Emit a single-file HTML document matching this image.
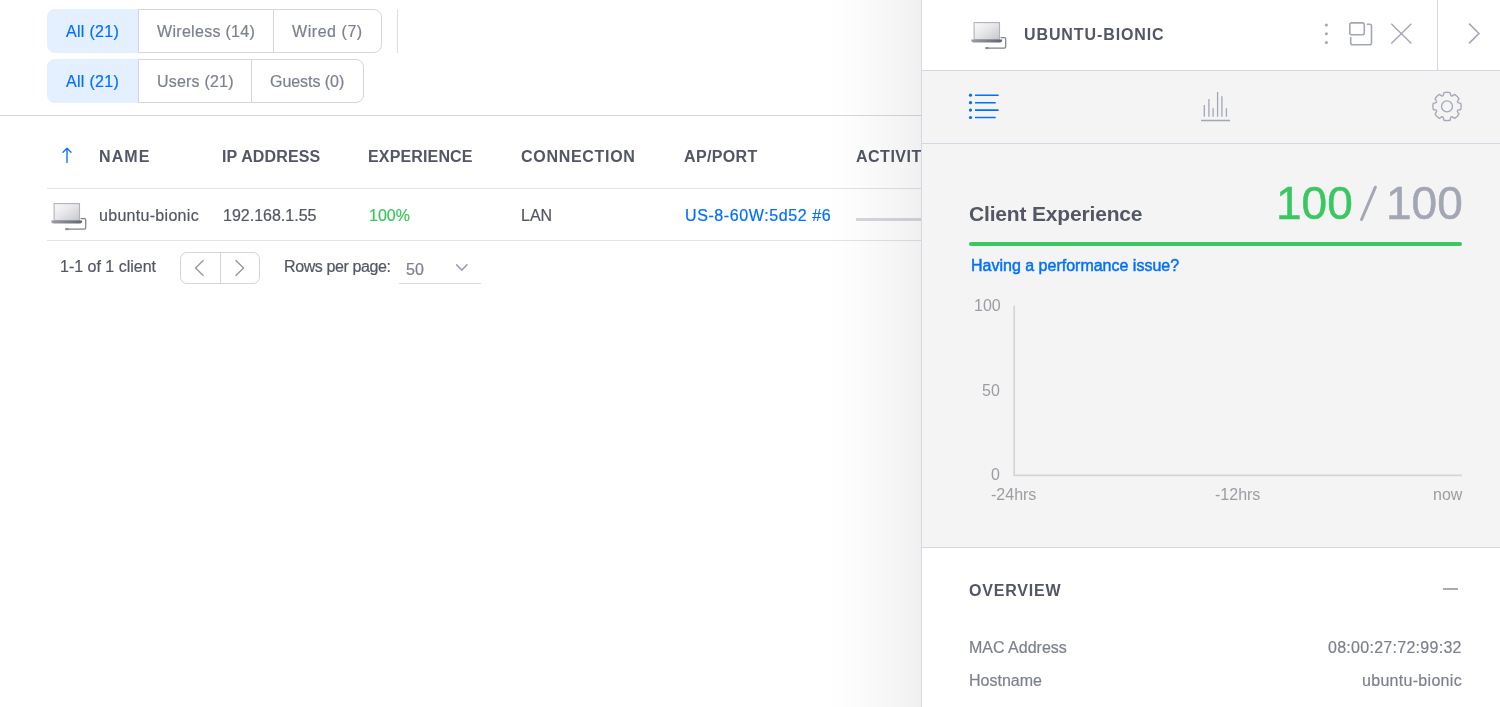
<!DOCTYPE html>
<html><head><meta charset="utf-8">
<style>
*{box-sizing:border-box;margin:0;padding:0}
html,body{width:1500px;height:707px;overflow:hidden;background:#fff}
body{position:relative;font-family:"Liberation Sans",sans-serif;color:#525665}
.a{will-change:transform;-webkit-text-stroke:0.2px currentColor}
.th{-webkit-text-stroke:0}
.a{position:absolute;white-space:nowrap;line-height:1}
.hl{position:absolute;height:1px;background:#dcdee5}
.vl{position:absolute;width:1px;background:#dcdee5}
.seg{position:absolute;border:1px solid #d3d5df;border-radius:8px;overflow:hidden;background:#fff}
.seg .on{position:absolute;left:-1px;top:-1px;bottom:-1px;background:#e4efff}
.seg .d{position:absolute;top:0;bottom:0;width:1px;background:#d3d5df}
.btxt{font-size:16px;color:#7c8090;letter-spacing:0.3px}
.blue{color:#006fff}
.th{font-size:16px;font-weight:700;-webkit-text-stroke:0;color:#525665}
.td{font-size:16px;color:#525665}
#panel{position:absolute;left:921px;top:0;width:579px;height:707px;background:#f4f4f4;border-left:1px solid #d5d8e3}
#shadow{position:absolute;left:826px;top:0;width:95px;height:707px;background:linear-gradient(to right,rgba(0,0,0,0) 0%,rgba(0,0,0,0.008) 25%,rgba(0,0,0,0.022) 50%,rgba(0,0,0,0.04) 75%,rgba(0,0,0,0.058) 100%)}
.ct{font-size:16px;color:#9c9ca4;-webkit-text-stroke:0}
</style></head><body>

<!-- segmented controls -->
<div class="a" style="left:47px;top:9px;width:92px;height:44px;background:#e4efff;border-radius:8px 0 0 8px"></div>
<div class="seg" style="left:138px;top:9px;width:244px;height:44px;border-radius:0 8px 8px 0">
  <div class="d" style="left:134px"></div>
</div>
<div class="a" style="left:47px;top:59px;width:92px;height:44px;background:#e4efff;border-radius:8px 0 0 8px"></div>
<div class="seg" style="left:138px;top:59px;width:226px;height:44px;border-radius:0 8px 8px 0">
  <div class="d" style="left:112px"></div>
</div>
<div class="vl" style="left:397px;top:9px;height:44px"></div>

<div class="a btxt blue" style="left:66px;top:24px">All (21)</div>
<div class="a btxt" style="left:157px;top:24px">Wireless (14)</div>
<div class="a btxt" style="left:292px;top:24px;letter-spacing:0.55px">Wired (7)</div>
<div class="a btxt blue" style="left:66px;top:74px">All (21)</div>
<div class="a btxt" style="left:157px;top:74px;letter-spacing:0.2px">Users (21)</div>
<div class="a btxt" style="left:270px;top:74px;letter-spacing:-0.05px">Guests (0)</div>

<div class="hl" style="left:0;top:115px;width:921px;background:#d5d8e2"></div>

<!-- table header -->
<svg class="a" style="left:60px;top:146px" width="14" height="18" viewBox="0 0 14 18"><path d="M7 2.2V16.4M3 6.2L7 2.2L11 6.2" fill="none" stroke="#0a74ff" stroke-width="1.4" stroke-linecap="round" stroke-linejoin="round"/></svg>
<div class="a th" style="left:99px;top:149px;letter-spacing:1.1px">NAME</div>
<div class="a th" style="left:222px;top:149px;letter-spacing:0.15px">IP ADDRESS</div>
<div class="a th" style="left:368px;top:149px;letter-spacing:0.15px">EXPERIENCE</div>
<div class="a th" style="left:521px;top:149px;letter-spacing:0.7px">CONNECTION</div>
<div class="a th" style="left:684px;top:149px;letter-spacing:0.35px">AP/PORT</div>
<div class="a th" style="left:856px;top:149px;letter-spacing:0.5px">ACTIVITY</div>

<div class="hl" style="left:47px;top:188px;width:874px;background:#e2e3ea"></div>

<!-- row -->
<svg class="a" style="left:48px;top:199.5px" width="40" height="32" viewBox="0 0 40 32">
  <defs><linearGradient id="scr1" x1="0" y1="0" x2="1" y2="1"><stop offset="0" stop-color="#fafafb"/><stop offset="0.45" stop-color="#e8e8eb"/><stop offset="1" stop-color="#c6c7cd"/></linearGradient>
  <linearGradient id="bas1" x1="0" y1="0" x2="1" y2="0"><stop offset="0" stop-color="#9c9ea6"/><stop offset="1" stop-color="#62656f"/></linearGradient></defs>
  <rect x="6.1" y="3.6" width="25.4" height="17" fill="url(#scr1)" stroke="#b0b2b8" stroke-width="1.1"/>
  <path d="M3.4 20.6H34a0.6 0.6 0 0 1 0.2 0.6Q34 23.4 32 23.4H5.4Q3.4 23.4 3.2 21.2a0.6 0.6 0 0 1 0.2-0.6Z" fill="url(#bas1)"/>
  <path d="M32.6 18.5H36.4Q37.7 18.5 37.7 19.8V27.8Q37.7 29.1 36.4 29.1H18" fill="none" stroke="#7f828c" stroke-width="1.25"/>
  <path d="M17.2 29.1H20.8" stroke="#8a8d96" stroke-width="2"/>
</svg>
<div class="a td" style="left:99px;top:208px;letter-spacing:0.3px">ubuntu-bionic</div>
<div class="a td" style="left:223px;top:208px">192.168.1.55</div>
<div class="a td" style="left:369px;top:208px;color:#38c85c">100%</div>
<div class="a td" style="left:521px;top:208px">LAN</div>
<div class="a td" style="left:685px;top:208px;color:#006fff;letter-spacing:0.6px">US-8-60W:5d52 #6</div>
<div class="a" style="left:856px;top:218px;width:65px;height:3px;background:#d6d8df"></div>

<div class="hl" style="left:47px;top:240px;width:874px;background:#e2e3ea"></div>

<!-- pagination -->
<div class="a td" style="left:60px;top:259px">1-1 of 1 client</div>
<div class="seg" style="left:180px;top:252px;width:80px;height:32px;border-radius:7px">
  <div class="d" style="left:39px"></div>
</div>
<div class="a td" style="left:284px;top:259px;letter-spacing:-0.4px">Rows per page:</div>
<div class="a td" style="left:406px;top:262px;color:#7c8090">50</div>
<div class="hl" style="left:399px;top:283px;width:82px;background:#d9dbe1"></div>
<svg class="a" style="left:180px;top:252px" width="80" height="32" viewBox="0 0 80 32" fill="none" stroke="#8e92a2" stroke-width="1.3">
  <path d="M23.5 8.3L15.5 16L23.5 23.7M55.6 8.3L63.6 16L55.6 23.7"/>
</svg>
<svg class="a" style="left:450px;top:258px" width="24" height="20" viewBox="0 0 24 20" fill="none" stroke="#a0a3b3" stroke-width="1.6">
  <path d="M6.2 6.4L11.8 12.1L17.4 6.4"/>
</svg>


<div id="shadow"></div>
<div id="panel">
  <div style="position:absolute;left:0;top:0;width:578px;height:71px;background:#fff;border-bottom:1px solid #d5d8e3"></div>
  <div style="position:absolute;left:0;top:143px;width:578px;height:1px;background:#d5d8e3"></div>
  <div style="position:absolute;left:0;top:547px;width:578px;height:160px;background:#fff;border-top:1px solid #d5d8e3"></div>
</div>
<div class="vl" style="left:1437px;top:0;height:70px;background:#d5d8e3"></div>

<!-- panel header -->
<svg class="a" style="left:968px;top:19px" width="40" height="32" viewBox="0 0 40 32">
  <defs><linearGradient id="scr2" x1="0" y1="0" x2="1" y2="1"><stop offset="0" stop-color="#fafafb"/><stop offset="0.45" stop-color="#e8e8eb"/><stop offset="1" stop-color="#c6c7cd"/></linearGradient>
  <linearGradient id="bas2" x1="0" y1="0" x2="1" y2="0"><stop offset="0" stop-color="#9c9ea6"/><stop offset="1" stop-color="#62656f"/></linearGradient></defs>
  <rect x="6.1" y="3.6" width="25.4" height="17" fill="url(#scr2)" stroke="#b0b2b8" stroke-width="1.1"/>
  <path d="M3.4 20.6H34a0.6 0.6 0 0 1 0.2 0.6Q34 23.4 32 23.4H5.4Q3.4 23.4 3.2 21.2a0.6 0.6 0 0 1 0.2-0.6Z" fill="url(#bas2)"/>
  <path d="M32.6 18.5H36.4Q37.7 18.5 37.7 19.8V27.8Q37.7 29.1 36.4 29.1H18" fill="none" stroke="#7f828c" stroke-width="1.25"/>
  <path d="M17.2 29.1H20.8" stroke="#8a8d96" stroke-width="2"/>
</svg>
<div class="a" style="left:1024px;top:27px;font-size:16px;font-weight:700;-webkit-text-stroke:0;letter-spacing:0.9px;color:#525665">UBUNTU-BIONIC</div>
<svg class="a" style="left:1315px;top:15px" width="110" height="40" viewBox="0 0 110 40" fill="none" stroke="#a3a6b6" stroke-width="1.6">
  <circle cx="11.4" cy="9.9" r="1.5" fill="#a3a6b6" stroke="none"/>
  <circle cx="11.4" cy="18.7" r="1.5" fill="#a3a6b6" stroke="none"/>
  <circle cx="11.4" cy="27.5" r="1.5" fill="#a3a6b6" stroke="none"/>
  <rect x="34.8" y="7.9" width="14.5" height="11.8" rx="2"/>
  <path d="M51.7 9.2H54.5a2 2 0 0 1 2 2V27.7a2 2 0 0 1-2 2H37.7a2 2 0 0 1-2-2V22"/>
  <path d="M76.3 8.8L96.4 28.6M96.4 8.8L76.3 28.6" stroke-width="1.4"/>
</svg>
<svg class="a" style="left:1460px;top:15px" width="30" height="40" viewBox="0 0 30 40" fill="none" stroke="#a3a6b6" stroke-width="1.5">
  <path d="M9 8.6L19 18.4L9 28.4"/>
</svg>

<!-- tabs -->
<svg class="a" style="left:960px;top:85px" width="50" height="40" viewBox="0 0 50 40" fill="none" stroke="#006fff" stroke-width="1.6">
  <circle cx="10.5" cy="10.2" r="1.6" fill="#006fff" stroke="none"/>
  <circle cx="10.5" cy="17.7" r="1.6" fill="#006fff" stroke="none"/>
  <circle cx="10.5" cy="25.1" r="1.6" fill="#006fff" stroke="none"/>
  <circle cx="10.5" cy="32.5" r="1.6" fill="#006fff" stroke="none"/>
  <path d="M15 10.2H38.6M15 17.7H35.7M15 25.1H38.6M15 32.5H35.7"/>
</svg>
<svg class="a" style="left:1195px;top:85px" width="40" height="40" viewBox="0 0 40 40" fill="none" stroke="#a3a6b6" stroke-width="1.3">
  <path d="M6 35.5H35" stroke-width="1.5"/>
  <path d="M9.3 31.7V20.1M13.9 31.7V14.1M18.1 31.7V23.2M22.6 31.7V7M26.9 31.7V11.3M31.4 31.7V23.2"/>
</svg>
<svg class="a" style="left:1427px;top:86px" width="40" height="40" viewBox="0 0 40 40" fill="none" stroke="#a6a9b8" stroke-width="1.35">
  <circle cx="20" cy="20.4" r="5.5"/>
  <path d="M16.19 9.65L16.93 6.54A14.2 14.2 0 0 1 23.07 6.54L23.81 9.65A11.4 11.4 0 0 1 24.91 10.11L27.63 8.42A14.2 14.2 0 0 1 31.98 12.77L30.29 15.49A11.4 11.4 0 0 1 30.75 16.59L33.86 17.33A14.2 14.2 0 0 1 33.86 23.47L30.75 24.21A11.4 11.4 0 0 1 30.29 25.31L31.98 28.03A14.2 14.2 0 0 1 27.63 32.38L24.91 30.69A11.4 11.4 0 0 1 23.81 31.15L23.07 34.26A14.2 14.2 0 0 1 16.93 34.26L16.19 31.15A11.4 11.4 0 0 1 15.09 30.69L12.37 32.38A14.2 14.2 0 0 1 8.02 28.03L9.71 25.31A11.4 11.4 0 0 1 9.25 24.21L6.14 23.47A14.2 14.2 0 0 1 6.14 17.33L9.25 16.59A11.4 11.4 0 0 1 9.71 15.49L8.02 12.77A14.2 14.2 0 0 1 12.37 8.42L15.09 10.11A11.4 11.4 0 0 1 16.19 9.65Z" stroke-linejoin="round"/>
</svg>

<!-- experience -->
<div class="a" style="left:969px;top:203px;font-size:21px;font-weight:700;-webkit-text-stroke:0;letter-spacing:-0.17px;color:#525665">Client Experience</div>
<div class="a" style="left:1276px;top:180px;font-size:46px;color:#39c860;-webkit-text-stroke:0.5px #39c860">100</div>
<svg class="a" style="left:1355px;top:180px" width="30" height="45" viewBox="0 0 30 45"><path d="M6.6 39.5L20.4 7.2" stroke="#a3a6b4" stroke-width="3" stroke-linecap="round"/></svg>
<div class="a" style="left:1386px;top:180px;font-size:46px;color:#a3a6b4;-webkit-text-stroke:0.5px #a3a6b4">100</div>
<div class="a" style="left:969px;top:242px;width:493px;height:4px;border-radius:2px;background:#39c860"></div>
<div class="a" style="left:971px;top:258px;font-size:16px;color:#006fff;-webkit-text-stroke:0.45px #006fff">Having a performance issue?</div>

<!-- chart -->
<svg class="a" style="left:1000px;top:300px" width="470" height="185" viewBox="0 0 470 185"><path d="M14.2 5.8V175.3H462" fill="none" stroke="#d5d5d7" stroke-width="1.7"/></svg>

<div class="a ct" style="left:974px;top:298px">100</div>
<div class="a ct" style="left:982px;top:383px">50</div>
<div class="a ct" style="left:991px;top:467px">0</div>
<div class="a ct" style="left:991px;top:487px">-24hrs</div>
<div class="a ct" style="left:1215px;top:487px">-12hrs</div>
<div class="a ct" style="left:1433px;top:487px">now</div>

<!-- overview -->
<div class="a" style="left:969px;top:583px;font-size:16px;font-weight:700;-webkit-text-stroke:0;letter-spacing:0.8px;color:#525665">OVERVIEW</div>
<div class="a" style="left:1442.6px;top:587.8px;width:14.5px;height:1.6px;background:#a6a9b8"></div>
<div class="a" style="left:969px;top:640px;font-size:16px;color:#7c8090">MAC Address</div>
<div class="a" style="left:969px;top:673px;font-size:16px;color:#7c8090">Hostname</div>
<div class="a" style="right:38px;top:640px;font-size:16px;letter-spacing:0.28px;color:#7c8090">08:00:27:72:99:32</div>
<div class="a" style="right:38px;top:673px;font-size:16px;letter-spacing:0.3px;color:#7c8090">ubuntu-bionic</div>

</body></html>
